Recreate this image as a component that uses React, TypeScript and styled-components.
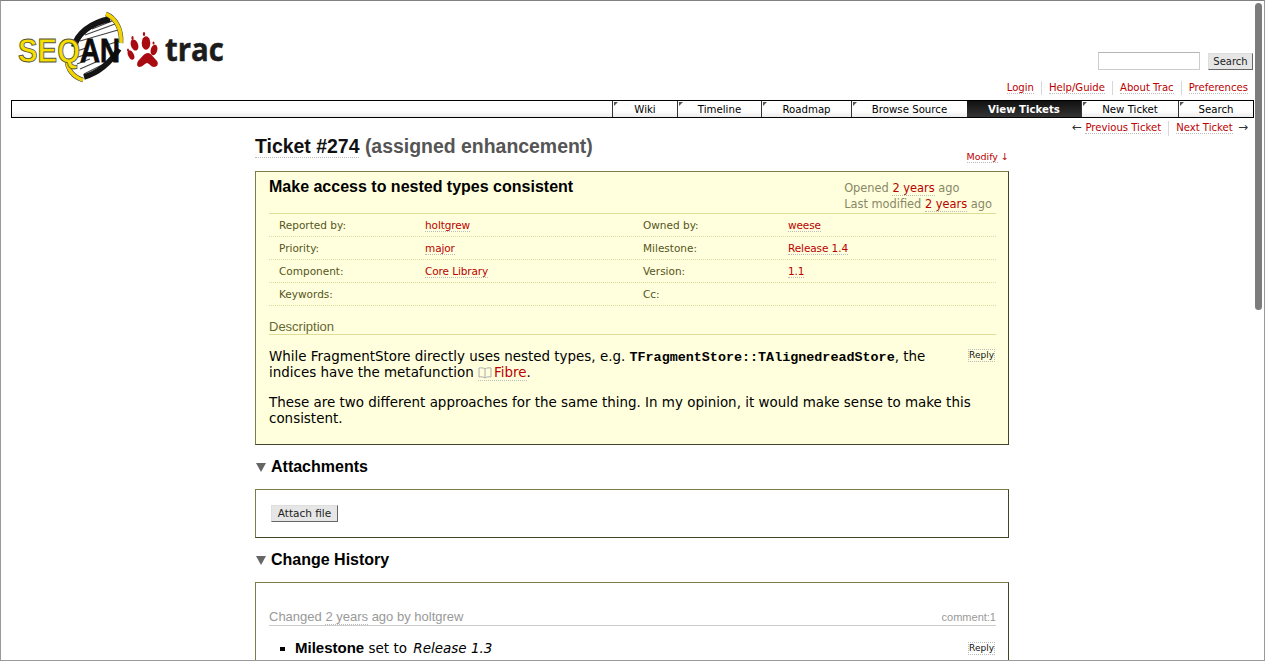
import styled, { createGlobalStyle } from 'styled-components';

const GlobalStyle = createGlobalStyle`
  html, body {
    margin: 0;
    padding: 0;
    height: 100%;
    overflow: hidden;
    background: #fff;
  }
  body {
    font-family: 'DejaVu Sans', Verdana, sans-serif;
    font-size: 11px;
    color: #000;
  }
`;

const Window = styled.div`
  position: relative;
  box-sizing: border-box;
  width: 1265px;
  height: 661px;
  overflow: hidden;
  background: #fff;
  border: 1px solid #9a9a9a;
  border-top-color: #808080;
`;

const ScrollThumb = styled.div`
  position: absolute;
  top: 2px;
  right: 2px;
  width: 7px;
  height: 307px;
  border-radius: 4px;
  background: #7c7c7c;
`;

const Header = styled.header`
  display: flex;
  justify-content: space-between;
  height: 99px;
  padding: 0 11px 0 16px;
`;

const LogoSvg = styled.svg`
  display: block;
  margin-top: 11px;
  overflow: visible;
`;

const HeaderRight = styled.div`
  display: flex;
  flex-direction: column;
  align-items: flex-end;
  padding-top: 51px;
`;

const SearchForm = styled.form`
  display: flex;
  align-items: center;
  gap: 8px;
  height: 18px;
`;

const SearchInput = styled.input`
  box-sizing: border-box;
  width: 102px;
  height: 18px;
  margin: 0;
  padding: 0 2px;
  background: #fff;
  border: 1px solid #ccc;
  border-top-color: #b5b5b5;
`;

const Button = styled.button<{ $w: number; $size: number }>`
  box-sizing: border-box;
  width: ${(p) => p.$w}px;
  height: 17px;
  margin: 0;
  padding: 0;
  font-family: 'DejaVu Sans', sans-serif;
  font-size: ${(p) => p.$size}px;
  line-height: 15px;
  color: #222;
  background: #e6e6e6;
  border: 1px solid;
  border-color: #dedede #666 #666 #dedede;
`;

const MetaNav = styled.ul`
  display: flex;
  margin: 11px 5px 0 0;
  padding: 0;
  list-style: none;
  font-size: 10.1px;
  line-height: 14px;
`;

const MetaItem = styled.li`
  padding: 0 7px;
  border-right: 1px solid #d7d7d7;

  &:last-child {
    padding-right: 0;
    border-right: 0;
  }
`;

const A = styled.a`
  color: #b00;
  text-decoration: none;
  border-bottom: 1px dotted #bbb;
`;

const MainNav = styled.ul`
  box-sizing: border-box;
  display: flex;
  justify-content: flex-end;
  height: 18px;
  margin: 0 10px;
  padding: 0;
  list-style: none;
  border: 1px solid #000;
  background: linear-gradient(#fff, #fff 60%, #ececec);
`;

const NavItem = styled.li<{ $active?: boolean; $w: number }>`
  position: relative;
  box-sizing: border-box;
  width: ${(p) => p.$w}px;
  text-align: center;
  line-height: 17px;
  font-size: 10.2px;
  color: ${(p) => (p.$active ? '#fff' : '#000')};
  font-weight: ${(p) => (p.$active ? 'bold' : 'normal')};
  background: ${(p) =>
    p.$active ? 'linear-gradient(#111, #333)' : 'linear-gradient(#fff, #fff 60%, #ececec)'};
  border-left: ${(p) => (p.$active ? '0' : '1px solid #333')};

  &::before {
    content: '';
    display: ${(p) => (p.$active ? 'none' : 'block')};
    position: absolute;
    top: 1px;
    left: 1px;
    border-top: 4px solid #555;
    border-right: 4px solid transparent;
  }
`;

const CtxNav = styled.ul`
  display: flex;
  justify-content: flex-end;
  height: 18px;
  margin: 0 16px 0 0;
  padding: 3px 0 0;
  box-sizing: border-box;
  list-style: none;
  font-size: 10.1px;
  line-height: 14px;
  color: #333;
`;

const CtxItem = styled.li`
  padding: 0 7px;
  border-right: 1px solid #d7d7d7;

  &:last-child {
    padding-right: 0;
    border-right: 0;
  }
`;

const ArrowLeft = styled.span`
  font-size: 12px;
  line-height: 12px;
`;

const ArrowRight = styled(ArrowLeft)`
  margin-left: 2px;
`;

const Content = styled.main`
  width: 754px;
  margin: 0 0 0 254px;
`;

const TitleRow = styled.div`
  display: flex;
  justify-content: space-between;
  height: 27px;
  margin-bottom: 8px;
`;

const Title = styled.h1`
  margin: 0;
  align-self: flex-start;
  font-family: 'Liberation Sans', Arial, sans-serif;
  font-size: 19.45px;
  font-weight: bold;
  line-height: 20px;
  color: #111;
`;

const TitleLink = styled.span`
  border-bottom: 1px dotted #bbb;
`;

const TicketStatus = styled.span`
  color: #555;
`;

const Modify = styled.div`
  align-self: flex-end;
  margin-bottom: -1px;
  line-height: 14px;
  font-size: 9.5px;
  color: #b00;
`;

const TicketBox = styled.section`
  box-sizing: border-box;
  height: 274px;
  padding: 0 12px 0 13px;
  background: #ffd;
  border: 1px solid;
  border-color: #7d7d48 #444428 #444428 #7d7d48;
`;

const TicketHead = styled.div`
  display: flex;
  justify-content: space-between;
  height: 41px;
  border-bottom: 1px solid #dd9;
`;

const Summary = styled.h2`
  margin: 0;
  padding-top: 6px;
  font-family: 'Liberation Sans', Arial, sans-serif;
  font-size: 16px;
  font-weight: bold;
  line-height: 17px;
`;

const Dates = styled.div`
  padding: 8px 4px 0 0;
  font-size: 11.4px;
  line-height: 16px;
  color: #886;
`;

const FieldRow = styled.div`
  display: grid;
  grid-template-columns: 156px 208px 155px 1fr;
  height: 23px;
  box-sizing: border-box;
  font-size: 10.5px;
  line-height: 22px;
  border-bottom: 1px dotted #dddd99;
`;

const FieldLabel = styled.div`
  padding-left: 10px;
  color: #555522;
`;

const FieldValue = styled.div`
  letter-spacing: -0.1px;
`;

const DescHeading = styled.h3`
  margin: 13px 0 0;
  font-family: 'Liberation Sans', Arial, sans-serif;
  font-size: 13px;
  font-weight: normal;
  line-height: 15px;
  color: #663;
  border-bottom: 1px solid #dd9;
`;

const DescBody = styled.div`
  margin-top: 14px;
  font-size: 13.45px;
  line-height: 16px;
`;

const Para = styled.p`
  margin: 0 0 14px;
`;

const Code = styled.code`
  font-family: 'Liberation Mono', 'Courier New', monospace;
  font-size: 13.4px;
  font-weight: bold;
  line-height: 1;
`;

const WikiLink = styled.a`
  color: #b00;
  text-decoration: none;
  border-bottom: 1px dotted #bbb;
`;

const BookSvg = styled.svg`
  vertical-align: -2px;
  margin-right: 2px;
`;

const ReplyButton = styled.div<{ $top: number }>`
  float: right;
  margin: ${(p) => p.$top}px 1px 0 0;
  font-size: 9px;
  line-height: 11px;
  color: #111;
  border: 1px dotted #bbb;
`;

const SectionHeading = styled.h2`
  display: flex;
  align-items: center;
  gap: 5px;
  margin: 12px 0 12px;
  padding-left: 1px;
  font-family: 'Liberation Sans', Arial, sans-serif;
  font-size: 16px;
  font-weight: bold;
  line-height: 20px;
`;

const Triangle = styled.span`
  width: 0;
  height: 0;
  border-left: 5px solid transparent;
  border-right: 5px solid transparent;
  border-top: 9px solid #666;
`;

const PlainBox = styled.section`
  box-sizing: border-box;
  padding: 15px 12px 15px 13px;
  background: #fff;
  border: 1px solid;
  border-color: #7d7d48 #444428 #444428 #7d7d48;
`;

const AttachBox = styled(PlainBox)`
  height: 49px;
  padding-left: 15px;
`;

const HistoryBox = styled(PlainBox)`
  padding-top: 26px;
  height: 200px;
`;

const ChangeHead = styled.div`
  display: flex;
  justify-content: space-between;
  font-family: 'Liberation Sans', Arial, sans-serif;
  font-size: 13px;
  line-height: 16px;
  color: #999;
  border-bottom: 1px solid #ccc;
`;

const ChangeLink = styled.span`
  border-bottom: 1px dotted #bbb;
`;

const CommentRef = styled.span`
  font-size: 11px;
  color: #999;
`;

const ChangeList = styled.ul`
  margin: 14px 0 0;
  padding: 0 0 0 11px;
  list-style: none;
  font-size: 13.5px;
  line-height: 16px;
`;

const ChangeItem = styled.li`
  &::before {
    content: '';
    display: inline-block;
    width: 5px;
    height: 4px;
    margin-right: 10px;
    vertical-align: 2px;
    background: #000;
  }

  strong {
    font-family: 'Liberation Sans', Arial, sans-serif;
    font-size: 15px;
  }

  em {
    margin-left: 2px;
  }
`;

const Logo = () => (
  <LogoSvg width="210" height="70" viewBox="17 12 210 70">
    <path d="M73 46 C77 33 91 22 110 18 C117 27 120 38 119 50 C110 64 98 74 84 77 C76 68 72 56 73 46 Z" fill="#fff" />
    <g stroke="#444" strokeWidth="1.2" fill="none">
      <path d="M92 29 L112 21" />
      <path d="M85 35 L115 24" />
      <path d="M80 41 L118 30" />
      <path d="M104 46 L119 41" />
      <path d="M74 52 L86 48" />
      <path d="M75 58 L84 55" />
      <path d="M77 64 L90 59" />
      <path d="M80 69 L96 62" />
      <path d="M84 74 L104 64" />
    </g>
    <path d="M74 47 C77 34 90 23 110 19" fill="none" stroke="#141414" strokeWidth="6" />
    <path d="M119 49 C110 63 98 73 84 77" fill="none" stroke="#141414" strokeWidth="5.5" />
    <path d="M106 14 C116 18 122 30 121 43" fill="none" stroke="#444" strokeWidth="4.6" />
    <path d="M106 14 C116 18 122 30 121 43" fill="none" stroke="#f2d400" strokeWidth="3.6" />
    <path d="M67 60 C67 69 73 77 83 80" fill="none" stroke="#444" strokeWidth="4.6" />
    <path d="M67 60 C67 69 73 77 83 80" fill="none" stroke="#f2d400" strokeWidth="3.6" />
    <text x="18" y="62" fontFamily="'Liberation Sans', sans-serif" fontWeight="bold" fontSize="33" fill="#f6de00" stroke="#55553a" strokeWidth="0.9" textLength="62" lengthAdjust="spacingAndGlyphs">SEQ</text>
    <text x="80" y="62" fontFamily="'Liberation Sans', sans-serif" fontWeight="bold" fontSize="33" fill="#0c0c0c" stroke="#0c0c0c" strokeWidth="0.8" textLength="40" lengthAdjust="spacingAndGlyphs">AN</text>
    <g fill="#a80c12">
      <path d="M148 53 C151 53 154 58 157 61 C159 64 157 67 154 67 C151 67 149 63 147 63 C145 63 143 67 139 67 C136 66 137 62 139 60 C142 57 144 53 148 53 Z" />
      <ellipse cx="146" cy="43" rx="4.3" ry="6.8" />
      <ellipse cx="134.5" cy="45" rx="3.6" ry="5.8" transform="rotate(-20 134.5 45)" />
      <ellipse cx="131" cy="55" rx="2.8" ry="5" transform="rotate(-25 131 55)" />
      <ellipse cx="154" cy="50" rx="3.3" ry="5.4" transform="rotate(15 154 50)" />
      <ellipse cx="144" cy="34" rx="1.2" ry="2" />
      <ellipse cx="132.5" cy="38" rx="1.1" ry="1.9" />
      <ellipse cx="153.5" cy="43" rx="1" ry="1.6" />
      <ellipse cx="128" cy="50" rx="1" ry="1.6" />
    </g>
    <text x="165" y="61" fontFamily="'Open Sans', sans-serif" fontWeight="bold" fontSize="33" fill="#1c1c1c" stroke="#1c1c1c" strokeWidth="0.5" textLength="59" lengthAdjust="spacingAndGlyphs">trac</text>
  </LogoSvg>
);

const BookIcon = () => (
  <BookSvg width="14" height="12" viewBox="0 0 14 12" fill="none" stroke="#aaa" strokeWidth="1">
    <path d="M7 2 C5.5 .8 3 .6 1 1 V10 C3 9.6 5.5 9.8 7 11 C8.5 9.8 11 9.6 13 10 V1 C11 .6 8.5 .8 7 2 Z M7 2 V11" />
  </BookSvg>
);

const navItems = [
  { label: 'Wiki', w: 65 },
  { label: 'Timeline', w: 84 },
  { label: 'Roadmap', w: 90 },
  { label: 'Browse Source', w: 116 },
  { label: 'View Tickets', w: 114, active: true },
  { label: 'New Ticket', w: 97 },
  { label: 'Search', w: 75 },
];

const fields = [
  ['Reported by:', 'holtgrew', 'Owned by:', 'weese'],
  ['Priority:', 'major', 'Milestone:', 'Release 1.4'],
  ['Component:', 'Core Library', 'Version:', '1.1'],
  ['Keywords:', '', 'Cc:', ''],
];

const App = () => (
  <>
    <GlobalStyle />
    <Window>
      <Header>
        <Logo />
        <HeaderRight>
          <SearchForm>
            <SearchInput type="text" />
            <Button type="button" $w={45} $size={10}>Search</Button>
          </SearchForm>
          <MetaNav>
            {['Login', 'Help/Guide', 'About Trac', 'Preferences'].map((item) => (
              <MetaItem key={item}><A href="#">{item}</A></MetaItem>
            ))}
          </MetaNav>
        </HeaderRight>
      </Header>

      <MainNav>
        {navItems.map((item) => (
          <NavItem key={item.label} $active={item.active} $w={item.w}>{item.label}</NavItem>
        ))}
      </MainNav>

      <CtxNav>
        <CtxItem><ArrowLeft>←</ArrowLeft> <A href="#">Previous Ticket</A></CtxItem>
        <CtxItem><A href="#">Next Ticket</A> <ArrowRight>→</ArrowRight></CtxItem>
      </CtxNav>

      <Content>
        <TitleRow>
          <Title>
            <TitleLink>Ticket #274</TitleLink> <TicketStatus>(assigned enhancement)</TicketStatus>
          </Title>
          <Modify><A href="#">Modify</A> <span>↓</span></Modify>
        </TitleRow>

        <TicketBox>
          <TicketHead>
            <Summary>Make access to nested types consistent</Summary>
            <Dates>
              <div>Opened <A href="#">2 years</A> ago</div>
              <div>Last modified <A href="#">2 years</A> ago</div>
            </Dates>
          </TicketHead>
          {fields.map(([l1, v1, l2, v2]) => (
            <FieldRow key={l1}>
              <FieldLabel>{l1}</FieldLabel>
              <FieldValue>{v1 && <A href="#">{v1}</A>}</FieldValue>
              <FieldLabel>{l2}</FieldLabel>
              <FieldValue>{v2 && <A href="#">{v2}</A>}</FieldValue>
            </FieldRow>
          ))}
          <DescHeading>Description</DescHeading>
          <DescBody>
            <ReplyButton $top={0}>Reply</ReplyButton>
            <Para>
              While FragmentStore directly uses nested types, e.g. <Code>TFragmentStore::TAlignedreadStore</Code>, the indices have the metafunction <WikiLink href="#"><BookIcon />Fibre</WikiLink>.
            </Para>
            <Para>
              These are two different approaches for the same thing. In my opinion, it would make sense to make this consistent.
            </Para>
          </DescBody>
        </TicketBox>

        <SectionHeading><Triangle />Attachments</SectionHeading>
        <AttachBox>
          <Button type="button" $w={67} $size={10.5}>Attach file</Button>
        </AttachBox>

        <SectionHeading><Triangle />Change History</SectionHeading>
        <HistoryBox>
          <ChangeHead>
            <span>Changed <ChangeLink>2 years</ChangeLink> ago by holtgrew</span>
            <CommentRef>comment:1</CommentRef>
          </ChangeHead>
          <ChangeList>
            <ReplyButton $top={2}>Reply</ReplyButton>
            <ChangeItem><strong>Milestone</strong> set to <em>Release 1.3</em></ChangeItem>
          </ChangeList>
        </HistoryBox>
      </Content>

      <ScrollThumb />
    </Window>
  </>
);

export default App;
